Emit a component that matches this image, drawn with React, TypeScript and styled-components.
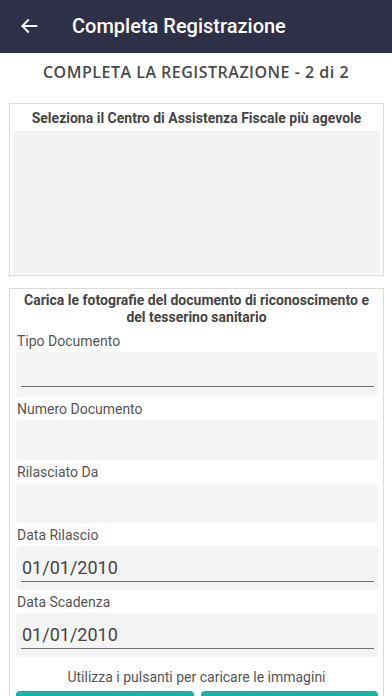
import React from "react";
import styled, { createGlobalStyle } from "styled-components";

const Global = createGlobalStyle`
  html, body { margin: 0; padding: 0; background: #ffffff; }
  body { font-family: Roboto, "Liberation Sans", sans-serif; -webkit-font-smoothing: antialiased; }
  * { box-sizing: border-box; }
`;

const Page = styled.div`
  width: 392px;
  min-height: 696px;
  background: #fff;
  overflow: hidden;
`;

const AppBar = styled.header`
  height: 53px;
  background: #2e3047;
  display: flex;
  align-items: center;
  padding-left: 18px;
  color: #fff;
`;

const BackButton = styled.button`
  width: 22px;
  height: 22px;
  padding: 0;
  border: 0;
  background: none;
  display: flex;
  align-items: center;
  justify-content: center;
  color: #fff;
  margin-right: 32px;
  margin-top: -1px;
`;

const Title = styled.h1`
  margin: 0;
  font-family: Roboto, sans-serif;
  font-size: 20px;
  font-weight: 500;
  letter-spacing: 0px;
  margin-top: -2px;
`;

const StepTitle = styled.h2`
  margin: 0;
  height: 50px;
  padding-top: 9px;
  text-align: center;
  font-family: "Open Sans", sans-serif;
  font-weight: 600;
  font-size: 16px;
  line-height: 20px;
  color: #4a4a4a;
  letter-spacing: 0.5px;
`;

const Card = styled.section<{ $pad?: number }>`
  margin: 0 8px 0 9px;
  border: 1px solid #dcdcdc;
  background: #fff;
  padding: 0 ${(p) => p.$pad ?? 3}px 2px;
`;

const CardTitle = styled.div<{ $pt: number }>`
  text-align: center;
  font-family: Roboto, sans-serif;
  font-weight: 700;
  font-size: 14px;
  line-height: 17px;
  color: #454545;
  padding-top: ${(p) => p.$pt}px;
`;

const MapArea = styled.div`
  margin-top: 4px;
  height: 142px;
  background: #f2f2f3;
`;

const Gap = styled.div<{ $h: number }>`
  height: ${(p) => p.$h}px;
`;

const Fields = styled.div`
  display: flex;
  flex-direction: column;
  gap: 3px;
  padding-top: 6px;
`;

const FieldGroup = styled.div`
  display: flex;
  flex-direction: column;
`;

const Label = styled.label`
  font-size: 14px;
  line-height: 19px;
  color: #555;
`;

const FieldBox = styled.div<{ $h: number }>`
  margin-top: 1px;
  margin-left: -1px;
  margin-right: -2px;
  height: ${(p) => p.$h}px;
  background: #f4f4f5;
  border-radius: 4px;
  padding: 0 4px 0 5px;
`;

const Underlined = styled.div<{ $h: number }>`
  height: ${(p) => p.$h}px;
  border-bottom: 1.5px solid #6f6f6f;
  display: flex;
  align-items: flex-end;
  padding-left: 1px;
  padding-bottom: 3px;
  font-size: 18px;
  color: #444;
`;

const Hint = styled.p`
  margin: 10px 0 0;
  text-align: center;
  font-size: 14px;
  line-height: 20px;
  color: #555;
`;

const Buttons = styled.div`
  display: grid;
  grid-template-columns: 1fr 1fr;
  gap: 7px;
  margin: 4px -2px 0 -1px;
`;

const UploadButton = styled.button`
  height: 44px;
  border: 0;
  border-radius: 4px;
  background: #17b3a4;
`;

type FieldProps = { label: string; height: number; line?: number; value?: string };

const Field = ({ label, height, line, value }: FieldProps) => (
  <FieldGroup>
    <Label>{label}</Label>
    <FieldBox $h={height}>{line ? <Underlined $h={line}>{value}</Underlined> : null}</FieldBox>
  </FieldGroup>
);

export default function App() {
  return (
    <Page>
      <Global />
      <AppBar>
        <BackButton aria-label="Indietro">
          <svg width="20" height="20" viewBox="0 0 24 24" fill="none" stroke="#fff" strokeWidth="2.2" strokeLinecap="square">
            <path d="M21 12H4M11 5l-7 7 7 7" />
          </svg>
        </BackButton>
        <Title>Completa Registrazione</Title>
      </AppBar>
      <StepTitle>COMPLETA LA REGISTRAZIONE - 2 di 2</StepTitle>
      <Card>
        <CardTitle $pt={6}>Seleziona il Centro di Assistenza Fiscale più agevole</CardTitle>
        <MapArea />
      </Card>
      <Gap $h={12} />
      <Card $pad={7}>
        <CardTitle $pt={3}>
          Carica le fotografie del documento di riconoscimento e
          <br />
          del tesserino sanitario
        </CardTitle>
        <Fields>
          <Field label="Tipo Documento" height={45} line={35} />
          <Field label="Numero Documento" height={40} />
          <Field label="Rilasciato Da" height={40} />
          <Field label="Data Rilascio" height={44} line={36} value="01/01/2010" />
          <Field label="Data Scadenza" height={44} line={36} value="01/01/2010" />
        </Fields>
        <Hint>Utilizza i pulsanti per caricare le immagini</Hint>
        <Buttons>
          <UploadButton aria-label="Carica documento" />
          <UploadButton aria-label="Carica tesserino" />
        </Buttons>
      </Card>
    </Page>
  );
}
